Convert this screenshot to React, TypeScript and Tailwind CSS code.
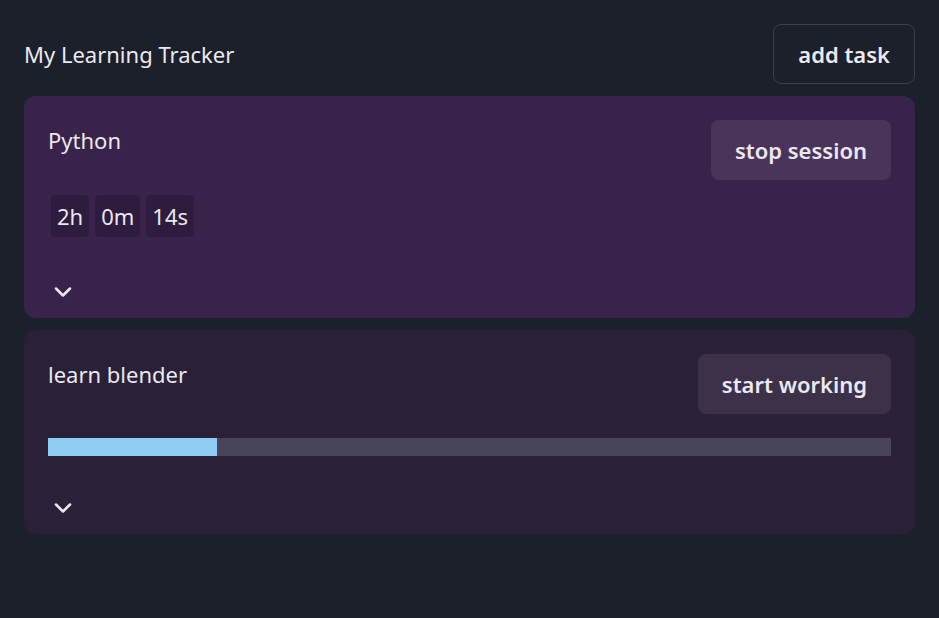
import { ChevronDown } from "lucide-react";

type Task = {
  name: string;
  running: boolean;
  progress: number;
};

const tasks: Task[] = [
  { name: "Python", running: true, progress: 0 },
  { name: "learn blender", running: false, progress: 20 },
];

const TimeChip = ({ value }: { value: string }) => (
  <span className="rounded-[4px] bg-[#2e1c3e] px-[6px] py-[6px] leading-[30px]">
    {value}
  </span>
);

const TaskCard = ({ task }: { task: Task }) => {
  return (
    <div
      className={`flex flex-col rounded-xl px-6 pt-6 pb-[19px] ${
        task.running ? "bg-[#3a234a]" : "bg-[#2a2139]"
      }`}
    >
      <div className="flex items-start justify-between">
        <h2 className="pt-[5px] text-[22px] leading-[30px]">{task.name}</h2>
        <button
          className={`h-[60px] rounded-lg px-6 text-[22px] font-semibold ${
            task.running ? "bg-[#4a3459]" : "bg-[#3c3149]"
          }`}
        >
          {task.running ? "stop session" : "start working"}
        </button>
      </div>

      {task.running ? (
        <div className="mt-[15px] ml-[3px] flex gap-[6px] text-[22px]">
          <TimeChip value="2h" />
          <TimeChip value="0m" />
          <TimeChip value="14s" />
        </div>
      ) : (
        <div className="mt-6 h-[18px] w-full bg-[#4a4459]">
          <div
            className="h-full bg-[#90cdf4]"
            style={{ width: `${task.progress}%` }}
          />
        </div>
      )}

      {/* expand */}
      <button
        className={`flex h-[14px] w-[30px] items-center justify-center ${
          task.running ? "mt-[48px]" : "mt-[45px]"
        }`}
      >
        <ChevronDown size={28} strokeWidth={2.2} />
      </button>
    </div>
  );
};

export default function App() {
  return (
    <div
      className="min-h-screen bg-[#1b202b] px-6 pt-6 text-[#ebe8ef]"
      style={{ fontFamily: '"Noto Sans", "Open Sans", sans-serif' }}
    >
      <div className="mb-3 flex items-center justify-between">
        <h1 className="text-[22px]">My Learning Tracker</h1>
        <button className="h-[60px] rounded-lg border border-[#3b404b] px-6 text-[22px] font-semibold">
          add task
        </button>
      </div>
      <div className="flex flex-col gap-3">
        {tasks.map((t) => (
          <TaskCard key={t.name} task={t} />
        ))}
      </div>
    </div>
  );
}
